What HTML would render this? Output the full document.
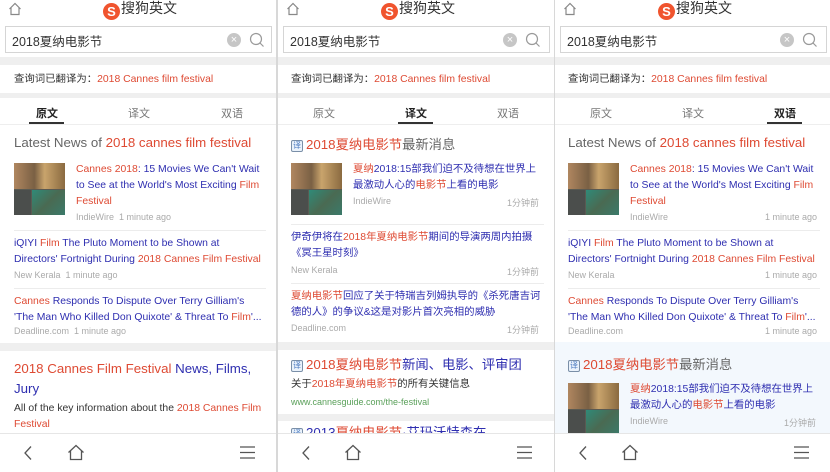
<!DOCTYPE html>
<html><head><meta charset="utf-8">
<style>
*{margin:0;padding:0;box-sizing:border-box}
body{width:830px;height:472px;background:#d8d8d8;position:relative;overflow:hidden;font-family:"Liberation Sans","Noto Sans CJK SC",sans-serif;}
.p{position:absolute;top:0;width:276px;height:472px;overflow:hidden;background:#fff}
.a{position:absolute;white-space:nowrap}
.r{color:#de4a33}.b{color:#2e2eb0}.g{color:#9a9a9a}.k{color:#333}
.band{position:absolute;left:0;width:276px;background:#efefef}
.hr{position:absolute;left:14px;right:10px;height:1px;background:#ececec}
.sb{position:absolute;left:5px;top:26px;width:267px;height:27px;border:1px solid #d5d5d5;background:#fff}
.logo{position:absolute;left:103px;top:-2px;font-size:14px;color:#333}
.logo i{display:inline-block;width:17px;height:17px;border-radius:50%;background:#f0542e;color:#fff;font-style:normal;font-weight:bold;font-size:13px;text-align:center;line-height:17px;vertical-align:-3px;margin-right:1px}
.tab{position:absolute;top:105px;font-size:11px;color:#777}
.tab.on{color:#222;font-weight:bold}
.ul{position:absolute;top:122px;width:35px;height:2px;background:#333}
.sm{font-size:10.4px;line-height:16px}
.meta{font-size:9px;color:#aaa}
.th{position:absolute;left:14px;width:51px;height:52px;background:#5a5a52}
.th .t1{position:absolute;left:0;top:0;width:51px;height:26px;background:linear-gradient(90deg,#b08760,#7a6044 40%,#c9a46c 60%,#8a6a40)}
.th .t2{position:absolute;left:0;top:27px;width:17px;height:25px;background:#4b4e4c}
.th .t3{position:absolute;left:18px;top:27px;width:33px;height:25px;background:linear-gradient(135deg,#2f8a78,#4a6a52 50%,#3b7a6a)}
.nav{position:absolute;left:0;top:433px;width:276px;height:39px;border-top:1px solid #e6e6e6;background:#fff}
.ic{display:inline-block;width:12px;height:12px;border:1px solid #7a8fa8;border-radius:2px;font-size:8px;line-height:10px;text-align:center;color:#4a7ac0;background:#eaf2fb;vertical-align:1px;margin-right:3px}
.h{font-size:13.3px}
</style></head><body>

<!-- PANEL 1 -->
<div class="p" style="left:0">
<svg class="a" style="left:8px;top:2px" width="14" height="14" viewBox="0 0 14 14"><path d="M1.5 7 L7 1.5 L12.5 7 M3 5.8 V12.5 H11 V5.8" fill="none" stroke="#888" stroke-width="1.2"/></svg>
<div class="logo"><i>S</i>搜狗英文</div>
<div class="sb"></div>
<div class="a k" style="left:12px;top:31px;font-size:12.5px">2018夏纳电影节</div>
<div class="a" style="left:227px;top:33px;width:14px;height:14px;border-radius:50%;background:#c6c6c6;color:#fff;font-size:11px;line-height:14px;text-align:center">×</div>
<svg class="a" style="left:249px;top:32px" width="16" height="16"><circle cx="7" cy="7" r="5.5" fill="none" stroke="#999" stroke-width="1.2"/><path d="M11 11 L14.5 14.5" stroke="#999" stroke-width="1.2"/></svg>
<div class="band" style="top:57px;height:8px"></div>
<div class="a sm" style="left:14px;top:72px"><span class="k">查询词已翻译为：</span><span class="r">2018 Cannes film festival</span></div>
<div class="band" style="top:93px;height:5px"></div>
<div class="tab on" style="left:36px">原文</div><div class="tab" style="left:128px">译文</div><div class="tab" style="left:221px">双语</div>
<div class="ul" style="left:29px"></div>
<div class="a" style="left:0;top:124px;width:276px;height:1px;background:#eee"></div>
<div class="a h" style="left:14px;top:135px;color:#666">Latest News of <span class="r">2018 cannes film festival</span></div>
<div class="th" style="top:163px"><div class="t1"></div><div class="t2"></div><div class="t3"></div></div>
<div class="a sm b" style="left:76px;top:162px"><span class="r">Cannes 2018</span>: 15 Movies We Can't Wait<br>to See at the World's Most Exciting <span class="r">Film</span><br><span class="r">Festival</span></div>
<div class="a meta" style="left:76px;top:212px">IndieWire&nbsp;&nbsp;1 minute ago</div>
<div class="hr" style="top:230px"></div>
<div class="a sm b" style="left:14px;top:236px">iQIYI <span class="r">Film</span> The Pluto Moment to be Shown at<br>Directors' Fortnight During <span class="r">2018 Cannes Film Festival</span></div>
<div class="a meta" style="left:14px;top:270px">New Kerala&nbsp;&nbsp;1 minute ago</div>
<div class="hr" style="top:288px"></div>
<div class="a sm b" style="left:14px;top:294px"><span class="r">Cannes</span> Responds To Dispute Over Terry Gilliam's<br>'The Man Who Killed Don Quixote' &amp; Threat To <span class="r">Film</span>'...</div>
<div class="a meta" style="left:14px;top:326px">Deadline.com&nbsp;&nbsp;1 minute ago</div>
<div class="band" style="top:343px;height:8px"></div>
<div class="a b h" style="left:14px;top:359px;line-height:20px"><span class="r">2018 Cannes Film Festival</span> News, Films,<br>Jury</div>
<div class="a sm k" style="left:14px;top:401px">All of the key information about the <span class="r">2018 Cannes Film</span><br><span class="r">Festival</span></div>
<div class="nav">
<svg class="a" style="left:22px;top:11px" width="12" height="16"><path d="M9 1.5 L3 8 L9 14.5" fill="none" stroke="#555" stroke-width="1.3"/></svg>
<svg class="a" style="left:67px;top:10px" width="18" height="17"><path d="M1.5 8.5 L9 1.5 L16.5 8.5 M3.5 7 V15.5 H14.5 V7" fill="none" stroke="#555" stroke-width="1.3"/></svg>
<svg class="a" style="left:240px;top:12px" width="15" height="13"><path d="M0 1h15M0 6.5h15M0 12h15" stroke="#555" stroke-width="1.2"/></svg>
</div>
</div>

<!-- PANEL 2 -->
<div class="p" style="left:278px">
<svg class="a" style="left:8px;top:2px" width="14" height="14" viewBox="0 0 14 14"><path d="M1.5 7 L7 1.5 L12.5 7 M3 5.8 V12.5 H11 V5.8" fill="none" stroke="#888" stroke-width="1.2"/></svg>
<div class="logo"><i>S</i>搜狗英文</div>
<div class="sb"></div>
<div class="a k" style="left:12px;top:31px;font-size:12.5px">2018夏纳电影节</div>
<div class="a" style="left:225px;top:33px;width:14px;height:14px;border-radius:50%;background:#c6c6c6;color:#fff;font-size:11px;line-height:14px;text-align:center">×</div>
<svg class="a" style="left:247px;top:32px" width="16" height="16"><circle cx="7" cy="7" r="5.5" fill="none" stroke="#999" stroke-width="1.2"/><path d="M11 11 L14.5 14.5" stroke="#999" stroke-width="1.2"/></svg>
<div class="band" style="top:57px;height:8px"></div>
<div class="a sm" style="left:13px;top:72px"><span class="k">查询词已翻译为：</span><span class="r">2018 Cannes film festival</span></div>
<div class="band" style="top:93px;height:5px"></div>
<div class="tab" style="left:35px">原文</div><div class="tab on" style="left:127px">译文</div><div class="tab" style="left:219px">双语</div>
<div class="ul" style="left:120px"></div>
<div class="a" style="left:0;top:124px;width:276px;height:1px;background:#eee"></div>
<div class="a h" style="left:13px;top:134px;color:#666"><span class="ic">译</span><span class="r">2018夏纳电影节</span>最新消息</div>
<div class="th" style="left:13px;top:163px"><div class="t1"></div><div class="t2"></div><div class="t3"></div></div>
<div class="a sm b" style="left:75px;top:162px"><span class="r">夏纳</span>2018:15部我们迫不及待想在世界上<br>最激动人心的<span class="r">电影节</span>上看的电影</div>
<div class="a meta" style="left:75px;top:196px">IndieWire</div>
<div class="a meta" style="left:229px;top:196px">1分钟前</div>
<div class="hr" style="top:224px;left:13px"></div>
<div class="a sm b" style="left:13px;top:230px">伊奇伊将在<span class="r">2018年夏纳电影节</span>期间的导演两周内拍摄<br>《冥王星时刻》</div>
<div class="a meta" style="left:13px;top:265px">New Kerala</div>
<div class="a meta" style="left:229px;top:265px">1分钟前</div>
<div class="hr" style="top:283px;left:13px"></div>
<div class="a sm b" style="left:13px;top:289px"><span class="r">夏纳电影节</span>回应了关于特瑞吉列姆执导的《杀死唐吉诃<br>德的人》的争议&amp;这是对影片首次亮相的威胁</div>
<div class="a meta" style="left:13px;top:323px">Deadline.com</div>
<div class="a meta" style="left:229px;top:323px">1分钟前</div>
<div class="band" style="top:342px;height:8px"></div>
<div class="a b h" style="left:13px;top:354px"><span class="ic">译</span><span class="r">2018夏纳电影节</span>新闻、电影、评审团</div>
<div class="a sm k" style="left:13px;top:377px">关于<span class="r">2018年夏纳电影节</span>的所有关键信息</div>
<div class="a" style="left:13px;top:397px;font-size:9px;color:#5aa05a">www.cannesguide.com/the-festival</div>
<div class="band" style="top:414px;height:7px"></div>
<div class="a b h" style="left:13px;top:422px"><span class="ic">译</span>2013<span class="r">夏纳电影节</span>·艾玛沃特森在</div>
<div class="nav">
<svg class="a" style="left:22px;top:11px" width="12" height="16"><path d="M9 1.5 L3 8 L9 14.5" fill="none" stroke="#555" stroke-width="1.3"/></svg>
<svg class="a" style="left:66px;top:10px" width="18" height="17"><path d="M1.5 8.5 L9 1.5 L16.5 8.5 M3.5 7 V15.5 H14.5 V7" fill="none" stroke="#555" stroke-width="1.3"/></svg>
<svg class="a" style="left:239px;top:12px" width="15" height="13"><path d="M0 1h15M0 6.5h15M0 12h15" stroke="#555" stroke-width="1.2"/></svg>
</div>
</div>

<!-- PANEL 3 -->
<div class="p" style="left:555px;width:275px">
<svg class="a" style="left:8px;top:2px" width="14" height="14" viewBox="0 0 14 14"><path d="M1.5 7 L7 1.5 L12.5 7 M3 5.8 V12.5 H11 V5.8" fill="none" stroke="#888" stroke-width="1.2"/></svg>
<div class="logo"><i>S</i>搜狗英文</div>
<div class="sb"></div>
<div class="a k" style="left:12px;top:31px;font-size:12.5px">2018夏纳电影节</div>
<div class="a" style="left:225px;top:33px;width:14px;height:14px;border-radius:50%;background:#c6c6c6;color:#fff;font-size:11px;line-height:14px;text-align:center">×</div>
<svg class="a" style="left:247px;top:32px" width="16" height="16"><circle cx="7" cy="7" r="5.5" fill="none" stroke="#999" stroke-width="1.2"/><path d="M11 11 L14.5 14.5" stroke="#999" stroke-width="1.2"/></svg>
<div class="band" style="top:57px;height:8px"></div>
<div class="a sm" style="left:13px;top:72px"><span class="k">查询词已翻译为：</span><span class="r">2018 Cannes film festival</span></div>
<div class="band" style="top:93px;height:5px"></div>
<div class="tab" style="left:35px">原文</div><div class="tab" style="left:127px">译文</div><div class="tab on" style="left:219px">双语</div>
<div class="ul" style="left:212px"></div>
<div class="a" style="left:0;top:124px;width:276px;height:1px;background:#eee"></div>
<div class="a h" style="left:13px;top:135px;color:#666">Latest News of <span class="r">2018 cannes film festival</span></div>
<div class="th" style="left:13px;top:163px"><div class="t1"></div><div class="t2"></div><div class="t3"></div></div>
<div class="a sm b" style="left:75px;top:162px"><span class="r">Cannes 2018</span>: 15 Movies We Can't Wait<br>to See at the World's Most Exciting <span class="r">Film</span><br><span class="r">Festival</span></div>
<div class="a meta" style="left:75px;top:212px">IndieWire</div>
<div class="a meta" style="left:210px;top:212px">1 minute ago</div>
<div class="hr" style="top:230px;left:13px"></div>
<div class="a sm b" style="left:13px;top:236px">iQIYI <span class="r">Film</span> The Pluto Moment to be Shown at<br>Directors' Fortnight During <span class="r">2018 Cannes Film Festival</span></div>
<div class="a meta" style="left:13px;top:270px">New Kerala</div>
<div class="a meta" style="left:210px;top:270px">1 minute ago</div>
<div class="hr" style="top:288px;left:13px"></div>
<div class="a sm b" style="left:13px;top:294px"><span class="r">Cannes</span> Responds To Dispute Over Terry Gilliam's<br>'The Man Who Killed Don Quixote' &amp; Threat To <span class="r">Film</span>'...</div>
<div class="a meta" style="left:13px;top:326px">Deadline.com</div>
<div class="a meta" style="left:210px;top:326px">1 minute ago</div>
<div class="a" style="left:0;top:342px;width:276px;height:92px;background:#f3f8fd"></div>
<div class="a h" style="left:13px;top:354px;color:#666"><span class="ic">译</span><span class="r">2018夏纳电影节</span>最新消息</div>
<div class="th" style="left:13px;top:383px"><div class="t1"></div><div class="t2"></div><div class="t3"></div></div>
<div class="a sm b" style="left:75px;top:382px"><span class="r">夏纳</span>2018:15部我们迫不及待想在世界上<br>最激动人心的<span class="r">电影节</span>上看的电影</div>
<div class="a meta" style="left:75px;top:416px">IndieWire</div>
<div class="a meta" style="left:229px;top:416px">1分钟前</div>
<div class="nav">
<svg class="a" style="left:22px;top:11px" width="12" height="16"><path d="M9 1.5 L3 8 L9 14.5" fill="none" stroke="#555" stroke-width="1.3"/></svg>
<svg class="a" style="left:66px;top:10px" width="18" height="17"><path d="M1.5 8.5 L9 1.5 L16.5 8.5 M3.5 7 V15.5 H14.5 V7" fill="none" stroke="#555" stroke-width="1.3"/></svg>
<svg class="a" style="left:239px;top:12px" width="15" height="13"><path d="M0 1h15M0 6.5h15M0 12h15" stroke="#555" stroke-width="1.2"/></svg>
</div>
</div>
</body></html>
